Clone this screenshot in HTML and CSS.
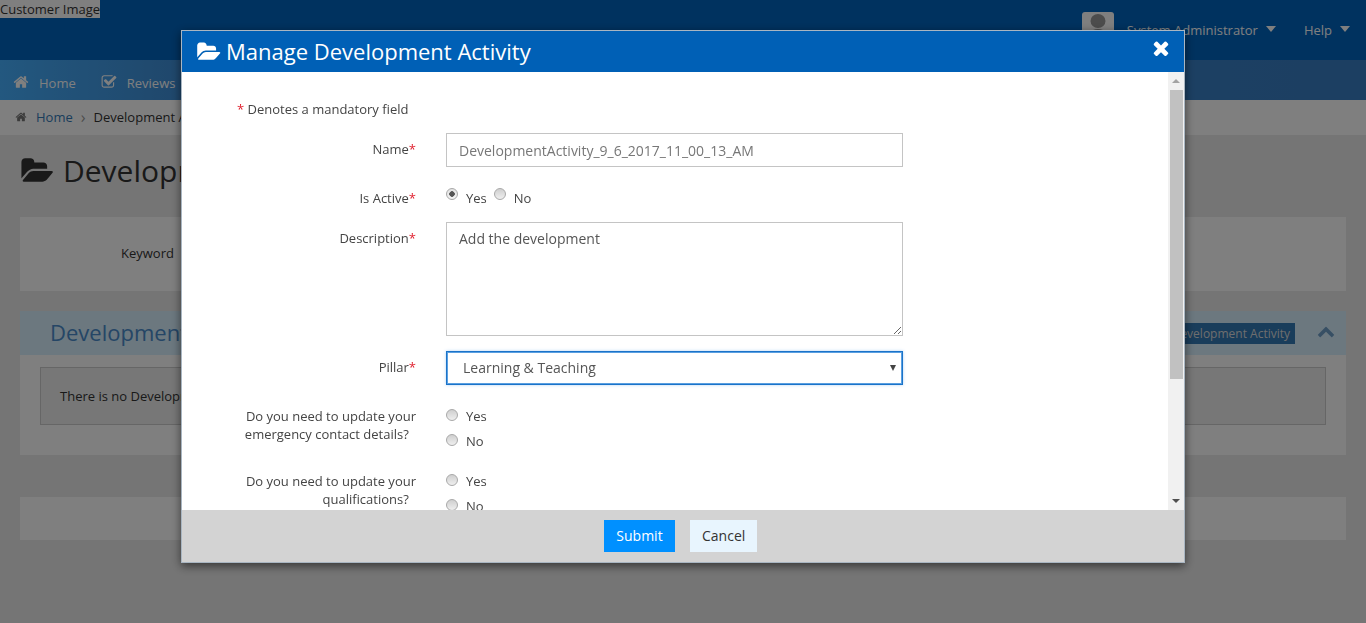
FILE: index.html
```html
<!DOCTYPE html>
<html lang="en">
<head>
<meta charset="utf-8">
<title>Manage Development Activity</title>
<link rel="stylesheet" href="styles.css">
</head>
<body>
<svg class="defs" aria-hidden="true">
  <symbol id="i-folder" viewBox="0 0 1920 1792"><path d="M1879 952q0 31-31 66l-336 396q-43 51-120.5 86.5t-143.5 35.5h-1088q-34 0-60.500-13t-26.500-43q0-31 31-66l336-396q43-51 120.500-86.500t143.500-35.500h1088q34 0 60.500 13t26.500 43zm-343-344v160h-832q-94 0-197 47.500t-164 119.500l-337 396-5 6q0-4-.5-12.500t-.5-12.500v-960q0-92 66-158t158-66h320q92 0 158 66t66 158v32h544q92 0 158 66t66 158z"/></symbol>
  <symbol id="i-home" viewBox="0 0 1792 1792"><path d="M1472 992v480q0 26-19 45t-45 19h-384v-384h-256v384h-384q-26 0-45-19t-19-45v-480q0-1 .5-3t.5-3l575-474 575 474q1 2 1 6zm223-69l-62 74q-8 9-21 11h-3q-13 0-21-7l-692-577-692 577q-12 8-24 7-13-2-21-11l-62-74q-8-10-7-23.500t11-21.500l719-599q32-26 76-26t76 26l244 204v-195q0-14 9-23t23-9h192q14 0 23 9t9 23v408l219 182q10 8 11 21.500t-7 23.500z"/></symbol>
  <symbol id="i-check" viewBox="0 0 1792 1792"><path d="M1472 930v318q0 119-84.500 203.500t-203.500 84.500h-832q-119 0-203.500-84.500t-84.500-203.500v-832q0-119 84.500-203.500t203.500-84.500h832q63 0 117 25 15 7 18 23 3 17-9 29l-49 49q-10 10-23 10-3 0-9-2-23-6-45-6h-832q-66 0-113 47t-47 113v832q0 66 47 113t113 47h832q66 0 113-47t47-113v-254q0-13 9-22l64-64q10-10 23-10 6 0 12 3 20 8 20 29zm231-489l-814 814q-24 24-57 24t-57-24l-430-430q-24-24-24-57t24-57l110-110q24-24 57-24t57 24l263 263 647-647q24-24 57-24t57 24l110 110q24 24 24 57t-24 57z"/></symbol>
  <symbol id="i-times" viewBox="0 0 1792 1792"><path d="M1490 1322q0 40-28 68l-136 136q-28 28-68 28t-68-28l-294-294-294 294q-28 28-68 28t-68-28l-136-136q-28-28-28-68t28-68l294-294-294-294q-28-28-28-68t28-68l136-136q28-28 68-28t68 28l294 294 294-294q28-28 68-28t68 28l136 136q28 28 28 68t-28 68l-294 294 294 294q28 28 28 68z"/></symbol>
  <symbol id="i-up" viewBox="0 0 1792 1792"><path d="M1683 1331l-166 165q-19 19-45 19t-45-19l-531-531-531 531q-19 19-45 19t-45-19l-166-165q-19-19-19-45.500t19-45.500l742-741q19-19 45-19t45 19l742 741q19 19 19 45.500t-19 45.500z"/></symbol>
</svg>

<div class="page">
  <header class="topbar">
    <span class="logo-alt">Customer Image</span>
    <div class="user">
      <svg class="avatar" viewBox="0 0 32 32" aria-hidden="true"><rect width="32" height="32" rx="3" class="avatar-bg"/><ellipse cx="16" cy="9" rx="7.500" ry="7" class="avatar-fg"/><path d="M3 32c0-10 6-15 13-15s13 5 13 15z" class="avatar-fg"/></svg>
      <span class="user-name">System Administrator</span><i class="caret"></i>
      <span class="help">Help</span><i class="caret"></i>
    </div>
  </header>
  <nav class="mainnav">
    <a class="navitem"><svg class="nav-ico"><use href="#i-home"/></svg>Home</a>
    <a class="navitem"><svg class="nav-ico"><use href="#i-check"/></svg>Reviews</a>
  </nav>
  <div class="crumbs">
    <svg class="crumb-ico"><use href="#i-home"/></svg>
    <a class="crumb-link">Home</a>
    <span class="crumb-sep">›</span>
    <span>Development Activities</span>
  </div>
  <main class="content">
    <h1 class="page-title"><svg class="title-ico"><use href="#i-folder"/></svg>Development Activities</h1>
    <section class="panel search"><span class="kw">Keyword</span></section>
    <section class="panel results">
      <div class="results-head">
        <h2>Development Activities</h2>
        <a class="add-btn">Add Development Activity</a>
        <svg class="up-ico"><use href="#i-up"/></svg>
      </div>
      <div class="empty">There is no Development Activity to display</div>
    </section>
    <section class="panel bottom"></section>
  </main>
</div>

<div class="backdrop"></div>

<div class="modal" role="dialog">
  <div class="modal-head">
    <svg class="modal-ico"><use href="#i-folder"/></svg>
    <span class="modal-title">Manage Development Activity</span>
    <svg class="close-ico"><use href="#i-times"/></svg>
  </div>
  <div class="modal-body">
    <p class="legend"><b class="req">*</b> Denotes a mandatory field</p>
    <div class="row row-name">
      <label class="lbl">Name<b class="req">*</b></label>
      <input class="field field-muted" type="text" value="DevelopmentActivity_9_6_2017_11_00_13_AM" readonly>
    </div>
    <div class="row row-active">
      <label class="lbl">Is Active<b class="req">*</b></label>
      <div class="radios-inline">
        <input class="radio" type="radio" name="active" checked><span class="rtext">Yes</span>
        <input class="radio" type="radio" name="active"><span class="rtext">No</span>
      </div>
    </div>
    <div class="row row-desc">
      <label class="lbl">Description<b class="req">*</b></label>
      <textarea class="field area">Add the development</textarea>
    </div>
    <div class="row row-pillar">
      <label class="lbl">Pillar<b class="req">*</b></label>
      <div class="select-wrap">
        <select class="select"><option>Learning &amp; Teaching</option></select>
      </div>
    </div>
    <div class="row row-q">
      <label class="lbl lbl-q">Do you need to update your emergency contact details?<b class="req ghost">*</b></label>
      <div class="radios-stack">
        <div class="ropt"><input class="radio" type="radio" name="q1"><span class="rtext">Yes</span></div>
        <div class="ropt"><input class="radio" type="radio" name="q1"><span class="rtext">No</span></div>
      </div>
    </div>
    <div class="row row-q">
      <label class="lbl lbl-q">Do you need to update your qualifications?<b class="req ghost">*</b></label>
      <div class="radios-stack">
        <div class="ropt"><input class="radio" type="radio" name="q2"><span class="rtext">Yes</span></div>
        <div class="ropt"><input class="radio" type="radio" name="q2"><span class="rtext">No</span></div>
      </div>
    </div>
  </div>
  <div class="vbar" aria-hidden="true">
    <span class="vbar-btn"><i class="arrow-up"></i></span>
    <span class="vbar-thumb"></span>
    <span class="vbar-rest"></span>
    <span class="vbar-btn"><i class="arrow-down"></i></span>
  </div>
  <div class="modal-foot">
    <button class="btn btn-primary" type="button">Submit</button>
    <button class="btn btn-light" type="button">Cancel</button>
  </div>
</div>
</body>
</html>
```

FILE: styles.css
```css
* { box-sizing: border-box; }
html, body { height: 100%; }
body {
  margin: 0;
  overflow: hidden;
  background: #ebebeb;
  color: #333;
  font-family: "Open Sans", "Liberation Sans", sans-serif;
  font-size: 13px;
}
.defs { display: none; }

/* page behind the dialog */
.topbar {
  height: 60px;
  background: #0064be;
  display: flex;
  justify-content: space-between;
  align-items: flex-start;
}
.logo-alt { background: #fff; color: #333; line-height: 18px; font-size: 13px; }
.user {
  display: flex;
  align-items: center;
  height: 60px;
  color: #fff;
  font-size: 13px;
  padding-right: 16px;
}
.avatar { width: 32px; height: 32px; margin-right: 13px; margin-top: -4px; }
.avatar-bg { fill: #fff; }
.avatar-fg { fill: #999; }
.caret {
  width: 0;
  height: 0;
  margin-left: 8px;
  margin-top: -3px;
  border: 5px solid transparent;
  border-bottom: 0;
  border-top: 6px solid #fff;
}
.help { margin-left: 28px; }
.mainnav {
  height: 40px;
  background: linear-gradient(90deg, #46b0ff 0, #3f8fd8 13%, #387ec4 100%);
  display: flex;
  align-items: center;
  padding: 6px 0 0 13px;
  gap: 25px;
  color: #fff;
}
.navitem { display: flex; align-items: center; }
.nav-ico { width: 16px; height: 16px; margin-right: 10px; fill: #fff; margin-top: -3px; }
.crumbs {
  height: 35px;
  background: #fff;
  display: flex;
  align-items: center;
  padding: 0 0 2px 15px;
}
.crumb-ico { width: 12px; height: 12px; fill: #777; margin-right: 9px; }
.crumb-link { color: #337ab7; }
.crumb-sep { margin: 0 8px; color: #999; font-size: 16px; line-height: 16px; }
.content { padding: 0 20px; }
.page-title {
  margin: 15px 0 26px;
  display: flex;
  align-items: center;
  font-size: 30px;
  font-weight: 400;
  line-height: 41px;
  height: 41px;
  color: #333;
}
.title-ico { width: 33px; height: 30px; margin: 0 9px 0 1px; fill: #333; }
.panel { background: #fefefe; }
.search { height: 74px; display: flex; align-items: center; padding: 0 0 2px 101px; }
.kw { font-size: 13px; }
.results { height: 144px; margin-top: 20px; }
.results-head {
  height: 44px;
  background: #d8f0ff;
  display: flex;
  align-items: center;
  padding: 0 11px 0 30px;
}
.results-head h2 {
  margin: -3px 0 0;
  font-size: 22px;
  font-weight: 400;
  color: #4a8ccc;
}
.add-btn {
  margin-left: auto;
  background: #337ab7;
  color: #ddd;
  height: 21px;
  line-height: 21px;
  padding: 0 5px;
  font-size: 12px;
}
.up-ico { width: 18px; height: 18px; margin-left: 22px; fill: #6f9fc8; margin-top: -4px; }
.empty {
  margin: 12px 20px 0;
  height: 58px;
  line-height: 56px;
  padding-left: 19px;
  border: 1px solid #ccc;
  background: #eee;
}
.bottom { height: 43px; margin-top: 42px; }

.backdrop { position: fixed; inset: 0; background: rgba(0, 0, 0, .5); }

/* dialog */
.modal {
  position: fixed;
  left: 181px;
  top: 30px;
  width: 1004px;
  height: 533px;
  display: flex;
  flex-direction: column;
  background: #fff;
  border: 1px solid #a9b6c2;
  box-shadow: 0 3px 9px rgba(0, 0, 0, .55);
}
.modal-head {
  flex: none;
  height: 41px;
  background: #0060b6;
  color: #fff;
  display: flex;
  align-items: center;
  padding: 0 15px;
}
.modal-ico { width: 24px; height: 22px; margin-right: 5px; fill: #fff; }
.modal-title { font-size: 22px; margin-top: -2px; }
.close-ico { width: 22px; height: 22px; margin: -7px -3px 0 auto; fill: #fff; }
.modal-body {
  flex: 1;
  min-height: 0;
  overflow-y: scroll;
  scrollbar-width: none;
  padding-top: 28px;
  color: #444;
}
.vbar {
  position: absolute;
  right: 0;
  top: 41px;
  width: 16px;
  height: 438px;
  background: #f1f1f1;
  display: flex;
  flex-direction: column;
  align-items: flex-end;
}
.vbar-btn {
  flex: none;
  width: 16px;
  height: 18px;
  display: flex;
  justify-content: center;
  align-items: center;
}
.vbar-thumb { flex: none; width: 13px; height: 289px; background: #c1c1c1; margin-right: 1px; }
.vbar-rest { flex: 1; }
.arrow-up { border: 4px solid transparent; border-top: 0; border-bottom: 4px solid #a3a3a3; }
.arrow-down { border: 4px solid transparent; border-bottom: 0; border-top: 4px solid #505050; }
.legend { margin: 0 0 15px 55px; line-height: 18px; }
.req { color: #e01f2d; font-weight: 400; }
.ghost { visibility: hidden; }
.row {
  display: grid;
  grid-template-columns: 234px 457px;
  column-gap: 30px;
  align-items: start;
}
.lbl { text-align: right; line-height: 18px; }
.lbl-q { padding-left: 50px; }
.row-name { height: 34px; margin-bottom: 18px; }
.row-name .lbl { padding-top: 7px; }
.row-active { height: 20px; margin-bottom: 17px; }
.row-active .lbl { padding-top: 4px; }
.row-desc { height: 114px; margin-bottom: 15px; }
.row-desc .lbl { padding-top: 7px; }
.row-pillar { height: 34px; margin-bottom: 22px; }
.row-pillar .lbl { padding-top: 7px; }
.row-q { height: 50px; margin-bottom: 15px; }
.field {
  width: 457px;
  border: 1px solid #c4c4c4;
  background: #fff;
  font: 14px/20px "Open Sans", "Liberation Sans", sans-serif;
  color: #555;
  padding: 6px 12px;
  outline: 0;
  display: block;
}
.field-muted { height: 34px; color: #777; }
.area { height: 114px; resize: vertical; }
.select-wrap { position: relative; width: 457px; height: 34px; }
.select-wrap::after {
  content: "";
  position: absolute;
  right: 7px;
  top: 14px;
  border: 3.500px solid transparent;
  border-bottom: 0;
  border-top: 6px solid #444;
}
.select {
  width: 100%;
  height: 34px;
  appearance: none;
  border: 1px solid #1a73c9;
  box-shadow: 0 0 0 1px #5a9fe0 inset, 0 0 3px rgba(70, 150, 230, .4);
  border-radius: 0;
  background: #fff;
  color: #555;
  font: 14px "Open Sans", "Liberation Sans", sans-serif;
  padding: 0 0 1px 16px;
  outline: 0;
}
.radio {
  appearance: none;
  flex: none;
  width: 12px;
  height: 12px;
  margin: 0;
  border-radius: 50%;
  border: 1px solid #a8a8a8;
  background: linear-gradient(#cfcfcf, #efefef);
}
.radio:checked {
  background: radial-gradient(circle, #555 0 2.500px, transparent 3px), linear-gradient(#e2e2e2, #f4f4f4);
}
.rtext { margin-left: 8px; line-height: 18px; }
.radios-inline { display: flex; align-items: flex-start; padding-top: 4px; height: 22px; }
.radios-inline .radio { margin-top: -1px; }
.radios-inline .rtext + .radio { margin-left: 7px; }
.radios-stack { display: flex; flex-direction: column; gap: 7px; }
.ropt { display: flex; align-items: flex-start; height: 18px; }
.ropt .radio { margin-top: 2px; }
.modal-foot {
  flex: none;
  height: 52px;
  background: #d3d3d3;
  display: flex;
  justify-content: center;
  align-items: center;
  gap: 15px;
  padding-right: 5px;
}
.btn {
  height: 32px;
  border: 0;
  font: 14px "Open Sans", "Liberation Sans", sans-serif;
  padding: 0 12px 2px;
  border-radius: 0;
}
.btn-primary { background: #0090ff; color: #fff; width: 71px; }
.btn-light { background: #e8f5fe; color: #333; width: 67px; }
```
